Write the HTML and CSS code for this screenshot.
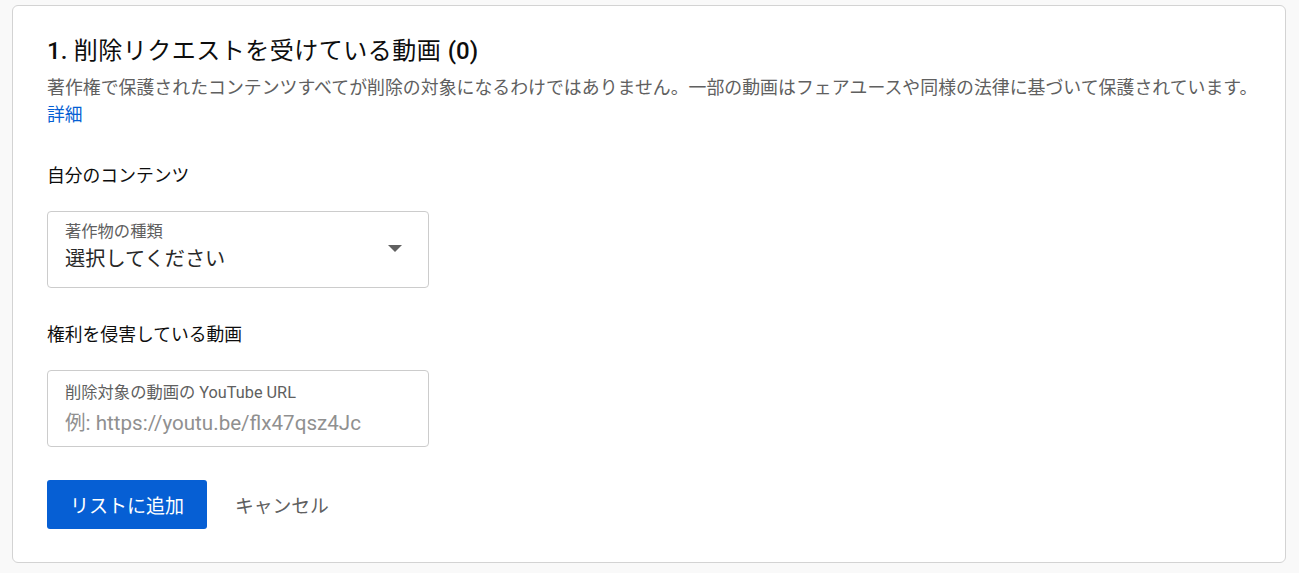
FILE: index.html
```html
<!DOCTYPE html>
<html lang="ja">
<head>
    <meta charset="UTF-8">
    <meta name="viewport" content="width=device-width, initial-scale=1.0">
    <title>削除リクエスト</title>
    <link rel="stylesheet" href="styles.css">
</head>
<body>
    <div class="card">
        <h1><span class="num">1.</span> 削除リクエストを受けている動画 <span class="num">(0)</span></h1>
        <p class="description">著作権で保護されたコンテンツすべてが削除の対象になるわけではありません。一部の動画はフェアユースや同様の法律に基づいて保護されています。</p>
        <a href="#" class="more-link">詳細</a>

        <h2 class="section-label">自分のコンテンツ</h2>
        <div class="field select-field">
            <div class="field-text">
                <span class="field-label">著作物の種類</span>
                <span class="field-value">選択してください</span>
            </div>
            <svg class="dropdown-arrow" width="14" height="7" viewBox="0 0 14 7">
                <path d="M0 0 L14 0 L7 7 Z" fill="#606060"/>
            </svg>
        </div>

        <h2 class="section-label">権利を侵害している動画</h2>
        <div class="field url-field">
            <span class="field-label">削除対象の動画の YouTube URL</span>
            <input type="text" class="field-input" placeholder="例: https://youtu.be/flx47qsz4Jc">
        </div>

        <div class="actions">
            <button type="button" class="primary-button">リストに追加</button>
            <button type="button" class="text-button">キャンセル</button>
        </div>
    </div>
</body>
</html>
```

FILE: styles.css
```css
* {
    margin: 0;
    padding: 0;
    box-sizing: border-box;
}

body {
    font-family: Roboto, "Noto Sans CJK JP", sans-serif;
    background: #f9f9f9;
    color: #0d0d0d;
    padding: 5px 13px 10px 12px;
}

.card {
    background: #ffffff;
    border: 1px solid #d3d3d3;
    border-radius: 6px;
    height: 558px;
    padding: 29px 16px 0 34px;
}

h1 {
    font-size: 24px;
    font-weight: 400;
    letter-spacing: 0.5px;
    line-height: 32px;
    color: #0d0d0d;
    margin-bottom: 7px;
}

h1 .num {
    font-weight: 500;
    letter-spacing: 0;
}

.description {
    font-size: 17.9px;
    line-height: 27px;
    color: #606060;
}

.more-link {
    display: block;
    width: max-content;
    font-size: 17.8px;
    line-height: 28px;
    color: #065fd4;
    text-decoration: none;
    margin-bottom: 33px;
}

.section-label {
    font-size: 17.8px;
    font-weight: 400;
    line-height: 27px;
    color: #0d0d0d;
    margin-bottom: 22px;
}

.field {
    width: 382px;
    height: 77px;
    border: 1px solid #cccccc;
    border-radius: 4px;
    padding: 0 0 0 17px;
}

.select-field {
    display: flex;
    align-items: center;
    justify-content: space-between;
    padding-right: 26px;
    margin-bottom: 33px;
}

.field-text {
    display: flex;
    flex-direction: column;
    gap: 3px;
    padding-bottom: 4px;
}

.field-label {
    display: block;
    font-size: 16.3px;
    line-height: 20px;
    color: #606060;
}

.field-value {
    font-size: 20.2px;
    line-height: 28px;
    color: #282828;
}

.dropdown-arrow {
    display: block;
    margin-bottom: 3px;
}

.url-field {
    display: flex;
    flex-direction: column;
    padding-top: 12px;
    margin-bottom: 33px;
}

.field-input {
    border: none;
    outline: none;
    background: transparent;
    font-family: inherit;
    font-size: 20.6px;
    line-height: 28px;
    height: 28px;
    margin-top: 6px;
    color: #0d0d0d;
    width: 340px;
}

.field-input::placeholder {
    color: #909090;
}

.actions {
    display: flex;
    align-items: center;
    gap: 12px;
}

.primary-button {
    background: #065fd4;
    color: #ffffff;
    border: none;
    border-radius: 3px;
    width: 160px;
    height: 49px;
    font-family: inherit;
    font-size: 19px;
    font-weight: 400;
    cursor: pointer;
}

.text-button {
    background: none;
    border: none;
    color: #606060;
    font-family: inherit;
    font-size: 18.8px;
    padding: 0 16px;
    height: 49px;
    cursor: pointer;
}
```
